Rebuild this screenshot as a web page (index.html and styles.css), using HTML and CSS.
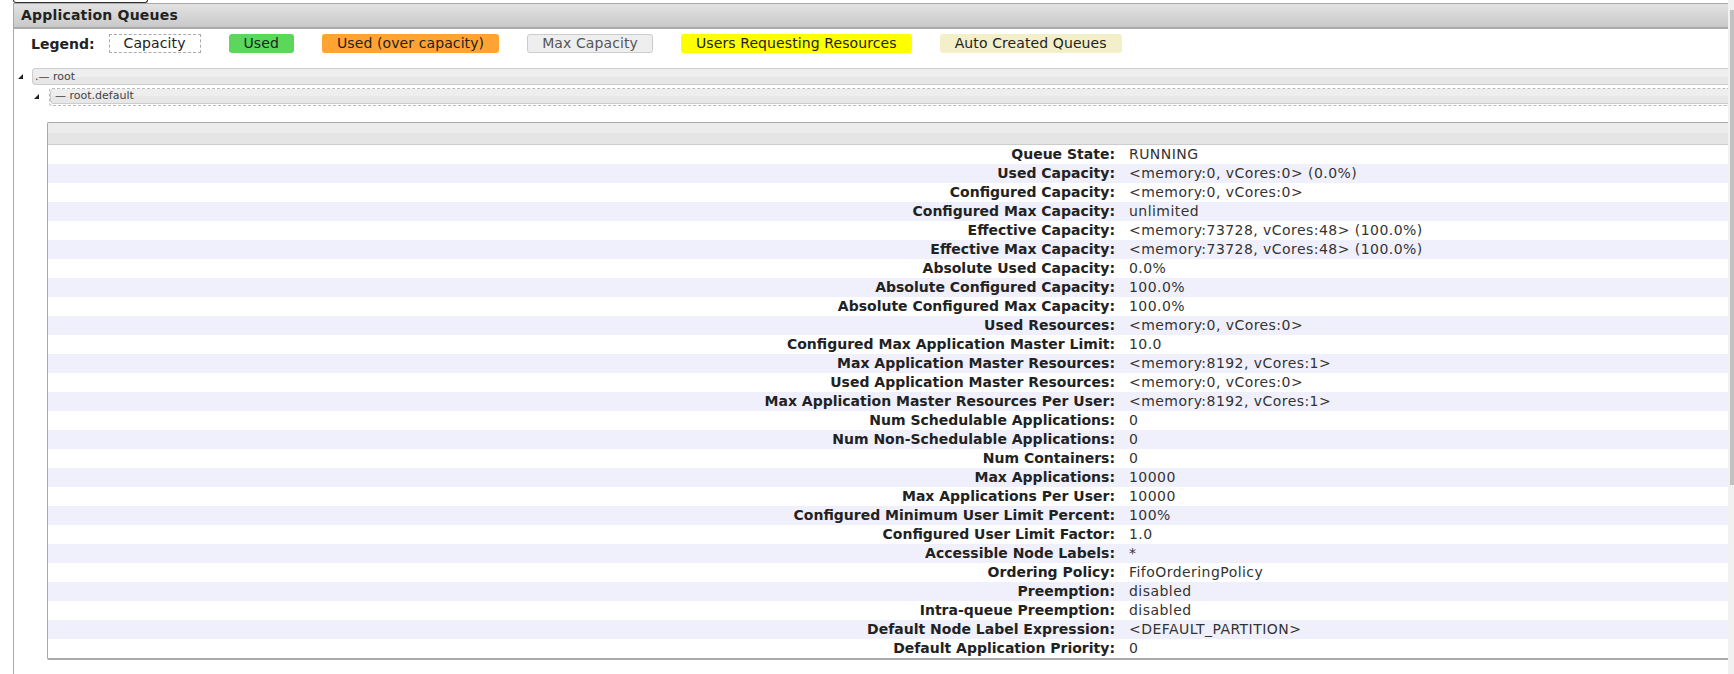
FILE: index.html
```html
<!DOCTYPE html>
<html>
<head>
<meta charset="utf-8">
<title>Application Queues</title>
<link rel="stylesheet" href="styles.css">
</head>
<body>
<div class="page">
  <div class="main">
    <div class="tab"></div>
    <div class="panel">
      <div class="panel-head">Application Queues</div>
      <div class="panel-body">
        <div class="legend">
          <span class="legend-label">Legend:</span>
          <span class="lg lg-cap">Capacity</span>
          <span class="lg lg-used">Used</span>
          <span class="lg lg-over">Used (over capacity)</span>
          <span class="lg lg-max">Max Capacity</span>
          <span class="lg lg-users">Users Requesting Resources</span>
          <span class="lg lg-auto">Auto Created Queues</span>
        </div>
        <div class="tree">
          <div class="node">
            <span class="toggle"></span>
            <div class="qbar"><span class="qtext">.— root</span></div>
          </div>
          <div class="node child">
            <span class="toggle"></span>
            <div class="qcap"><div class="qbar"><span class="qtext">— root.default</span></div></div>
          </div>
          <div class="info">
            <div class="info-head"></div>
            <div class="info-rows">
              <div class="row"><div class="k">Queue State:</div><div class="v">RUNNING</div></div>
              <div class="row"><div class="k">Used Capacity:</div><div class="v">&lt;memory:0, vCores:0&gt; (0.0%)</div></div>
              <div class="row"><div class="k">Configured Capacity:</div><div class="v">&lt;memory:0, vCores:0&gt;</div></div>
              <div class="row"><div class="k">Configured Max Capacity:</div><div class="v">unlimited</div></div>
              <div class="row"><div class="k">Effective Capacity:</div><div class="v">&lt;memory:73728, vCores:48&gt; (100.0%)</div></div>
              <div class="row"><div class="k">Effective Max Capacity:</div><div class="v">&lt;memory:73728, vCores:48&gt; (100.0%)</div></div>
              <div class="row"><div class="k">Absolute Used Capacity:</div><div class="v">0.0%</div></div>
              <div class="row"><div class="k">Absolute Configured Capacity:</div><div class="v">100.0%</div></div>
              <div class="row"><div class="k">Absolute Configured Max Capacity:</div><div class="v">100.0%</div></div>
              <div class="row"><div class="k">Used Resources:</div><div class="v">&lt;memory:0, vCores:0&gt;</div></div>
              <div class="row"><div class="k">Configured Max Application Master Limit:</div><div class="v">10.0</div></div>
              <div class="row"><div class="k">Max Application Master Resources:</div><div class="v">&lt;memory:8192, vCores:1&gt;</div></div>
              <div class="row"><div class="k">Used Application Master Resources:</div><div class="v">&lt;memory:0, vCores:0&gt;</div></div>
              <div class="row"><div class="k">Max Application Master Resources Per User:</div><div class="v">&lt;memory:8192, vCores:1&gt;</div></div>
              <div class="row"><div class="k">Num Schedulable Applications:</div><div class="v">0</div></div>
              <div class="row"><div class="k">Num Non-Schedulable Applications:</div><div class="v">0</div></div>
              <div class="row"><div class="k">Num Containers:</div><div class="v">0</div></div>
              <div class="row"><div class="k">Max Applications:</div><div class="v">10000</div></div>
              <div class="row"><div class="k">Max Applications Per User:</div><div class="v">10000</div></div>
              <div class="row"><div class="k">Configured Minimum User Limit Percent:</div><div class="v">100%</div></div>
              <div class="row"><div class="k">Configured User Limit Factor:</div><div class="v">1.0</div></div>
              <div class="row"><div class="k">Accessible Node Labels:</div><div class="v">*</div></div>
              <div class="row"><div class="k">Ordering Policy:</div><div class="v">FifoOrderingPolicy</div></div>
              <div class="row"><div class="k">Preemption:</div><div class="v">disabled</div></div>
              <div class="row"><div class="k">Intra-queue Preemption:</div><div class="v">disabled</div></div>
              <div class="row"><div class="k">Default Node Label Expression:</div><div class="v">&lt;DEFAULT_PARTITION&gt;</div></div>
              <div class="row"><div class="k">Default Application Priority:</div><div class="v">0</div></div>
            </div>
          </div>
        </div>
      </div>
    </div>
  </div>
  <div class="scrollbar"><div class="thumb"></div></div>
</div>
</body>
</html>
```

FILE: styles.css
```css
html, body {
  margin: 0;
  padding: 0;
  background: #ffffff;
}

body {
  font-family: "DejaVu Sans", Verdana, sans-serif;
  font-size: 14px;
  color: #222;
}

.page {
  display: flex;
  height: 674px;
  overflow: hidden;
}

.main {
  flex: 1;
  display: flex;
  flex-direction: column;
  min-width: 0;
}

.tab {
  margin-left: 13px;
  width: 133px;
  height: 2px;
  border: 1px solid #333;
  border-top: none;
  border-radius: 0 0 4px 4px;
}

.panel {
  flex: 1;
  display: flex;
  flex-direction: column;
  margin-left: 13px;
}

.panel-head {
  height: 23px;
  line-height: 23px;
  border-top: 1px solid #aaa;
  border-bottom: 2px solid #aaa;
  border-left: 1px solid #aaa;
  background: linear-gradient(#e2e2e2, #c9c9c9);
  padding-left: 7px;
  font-weight: bold;
  font-size: 14px;
  letter-spacing: 0.2px;
  color: #222;
}

.panel-body {
  flex: 1;
  border-left: 1px solid #aaa;
}

.legend {
  display: flex;
  align-items: center;
  margin-top: 5px;
  padding-left: 17px;
  height: 19px;
}

.legend-label {
  font-weight: bold;
  font-size: 14px;
  margin-right: 14px;
}

.lg {
  height: 17px;
  line-height: 17px;
  padding: 0 14px;
  margin-right: 28px;
  border: 1px solid transparent;
  border-radius: 3px;
  color: #222;
  font-size: 14px;
  letter-spacing: 0.1px;
}

.lg-cap {
  border: 1px dashed #aaa;
  border-radius: 0;
}

.lg-used {
  background: #5bd75b;
}

.lg-over {
  background: #ffa333;
}

.lg-max {
  background: #eeeeee;
  border-color: #cccccc;
  color: #555;
}

.lg-users {
  background: #ffff00;
}

.lg-auto {
  background: #f3efc9;
}

.tree {
  margin-top: 15px;
}

.node {
  display: flex;
  align-items: center;
  height: 17px;
}

.node.child {
  margin-top: 3px;
  padding-left: 16px;
}

.toggle {
  width: 0;
  height: 0;
  border-left: 5px solid transparent;
  border-bottom: 5px solid #222;
  margin-left: 4px;
  margin-right: 9px;
}

.qbar {
  flex: 1;
  height: 15px;
  border: 1px solid #cccccc;
  border-right: none;
  border-radius: 4px 0 0 4px;
  background: linear-gradient(#eeeeee 50%, #e7e7e7 50%);
  display: flex;
  align-items: center;
}

.qtext {
  font-size: 11px;
  color: #444;
  padding-left: 2px;
}

.qcap {
  flex: 1;
  height: 16px;
  margin-left: 1px;
  border-top: 1px dashed #bbb;
  border-bottom: 1px dashed #bbb;
  border-left: 1px dashed #bbb;
  border-radius: 3px 0 0 3px;
  display: flex;
}

.qcap .qbar {
  height: 14px;
  border-top: none;
}

.qcap .qtext {
  padding-left: 4px;
}

.info {
  margin-top: 17px;
  margin-left: 33px;
  border-top: 1px solid #aaa;
  border-left: 1px solid #aaa;
  border-bottom: 2px solid #aaa;
  border-radius: 2px 0 0 2px;
}

.info-head {
  height: 21px;
  border-bottom: 1px solid #cccccc;
  background: linear-gradient(#ececec 50%, #e5e5e5 50%);
}

.row {
  display: grid;
  grid-template-columns: 1073px 1fr;
  height: 19px;
  line-height: 19px;
}

.row:nth-child(even) {
  background: #f0f0fc;
}

.k {
  text-align: right;
  font-weight: bold;
  color: #222;
  padding-right: 6px;
  white-space: nowrap;
}

.v {
  padding-left: 8px;
  color: #333;
  white-space: nowrap;
  letter-spacing: 0.45px;
}

.scrollbar {
  width: 4px;
  padding-left: 2px;
  padding-top: 10px;
  background: #f1f1f1;
}

.thumb {
  height: 475px;
  background: #c1c1c1;
}
```
